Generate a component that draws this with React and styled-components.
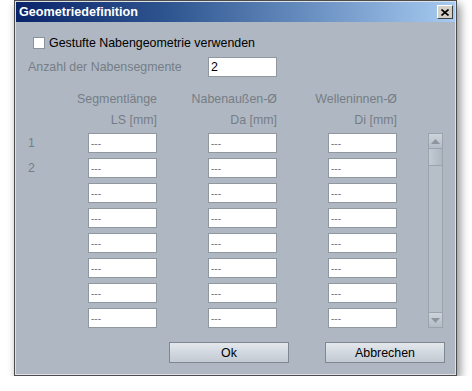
import React from 'react'
import styled, { createGlobalStyle } from 'styled-components'

const GlobalStyle = createGlobalStyle`
  html, body {
    margin: 0;
    padding: 0;
    background: #ffffff;
  }
  body {
    font-family: "Liberation Sans", Arial, sans-serif;
  }
`

const Window = styled.div`
  margin-left: 14px;
  width: 443px;
  height: 376px;
  box-sizing: border-box;
  border: 1px solid #4c4c4c;
  background: #afb8c2;
  box-shadow: 3px 4px 9px rgba(0, 0, 0, 0.45);
  display: flex;
  flex-direction: column;
`

const Inner = styled.div`
  flex: 1;
  border: 1px solid #dde1e6;
  display: flex;
  flex-direction: column;
`

const TitleBar = styled.div`
  height: 20px;
  display: flex;
  align-items: center;
  justify-content: space-between;
  padding: 0 2px 0 3px;
  background: linear-gradient(to right, #0a246a 0%, #2f5690 35%, #6f95c6 70%, #a6caf0 100%);
  color: #ffffff;
  font-weight: bold;
  font-size: 12.6px;
`

const CloseButton = styled.div`
  width: 16px;
  height: 14px;
  box-sizing: border-box;
  background: #d4d0c8;
  border: 1px solid;
  border-color: #ffffff #404040 #404040 #ffffff;
  display: flex;
  align-items: center;
  justify-content: center;
`

const Content = styled.div`
  flex: 1;
  display: flex;
  flex-direction: column;
  padding: 15px 10px 9px 12px;
  font-size: 12.4px;
  color: #000000;
`

const CheckRow = styled.label`
  display: flex;
  align-items: center;
  height: 12px;
  margin-left: 5px;
  gap: 4px;
`

const CheckBox = styled.span`
  width: 12px;
  height: 12px;
  box-sizing: border-box;
  background: #ffffff;
  border: 1px solid #8a929b;
`

const Muted = styled.span`
  color: #767d86;
`

const CountRow = styled.div`
  display: flex;
  align-items: center;
  margin-top: 8px;
  height: 20px;
  ${Muted} {
    width: 180px;
  }
`

const Field = styled.div`
  width: 69px;
  height: 20px;
  box-sizing: border-box;
  background: #ffffff;
  border: 1px solid #8f979f;
  display: flex;
  align-items: center;
  padding-left: 2px;
  font-size: ${(p) => (p.$small ? '10px' : '12.4px')};
  color: ${(p) => (p.$small ? '#6c737b' : '#000000')};
`

const HeaderRow = styled.div`
  display: flex;
  height: 21px;
  align-items: center;
  margin-top: ${(p) => p.$top || 0}px;
  margin-left: 9px;
`

const HeaderCell = styled.div`
  width: 120px;
  text-align: right;
  color: #767d86;
`

const TableArea = styled.div`
  display: flex;
  margin-top: 3px;
  gap: 31px;
`

const Rows = styled.div`
  display: flex;
  flex-direction: column;
  gap: 5px;
`

const Row = styled.div`
  display: flex;
  align-items: center;
  gap: 51px;
`

const RowLabel = styled.span`
  width: 9px;
  color: #767d86;
`

const RowFields = styled.div`
  display: flex;
  gap: 51px;
`

const ScrollBar = styled.div`
  width: 15px;
  box-sizing: border-box;
  display: flex;
  flex-direction: column;
  background: #b6bec7;
  border: 1px solid #9ba4ad;
`

const ScrollBtn = styled.div`
  height: 14px;
  display: flex;
  align-items: center;
  justify-content: center;
  background: linear-gradient(to bottom, #cdd4db, #b3bcc6);
  border-bottom: ${(p) => (p.$down ? 'none' : '1px solid #9ba4ad')};
  border-top: ${(p) => (p.$down ? '1px solid #9ba4ad' : 'none')};
`

const Thumb = styled.div`
  height: 16px;
  background: linear-gradient(to right, #c3cbd3, #aeb7c1);
  border-bottom: 1px solid #9ba4ad;
`

const Track = styled.div`
  flex: 1;
`

const ButtonRow = styled.div`
  display: flex;
  justify-content: flex-end;
  gap: 36px;
  margin-top: 14px;
`

const Button = styled.div`
  width: 120px;
  height: 21px;
  box-sizing: border-box;
  border: 1px solid #7f8790;
  background: linear-gradient(to bottom, #e4e8ed 0%, #d2d8df 50%, #c3cad2 100%);
  display: flex;
  align-items: center;
  justify-content: center;
  font-size: 12.4px;
  color: #000000;
`

const Arrow = ({ down }) => (
  <svg width="9" height="5" viewBox="0 0 9 5">
    <polygon points={down ? '0,0 9,0 4.5,5' : '0,5 9,5 4.5,0'} fill="#8d96a0" />
  </svg>
)

function App() {
  const rows = [1, 2, 3, 4, 5, 6, 7, 8]

  return (
    <>
      <GlobalStyle />
      <Window>
        <Inner>
          <TitleBar>
            <span>Geometriedefinition</span>
            <CloseButton>
              <svg width="8" height="7" viewBox="0 0 8 7">
                <path d="M0.5 0.5 L7.5 6.5 M7.5 0.5 L0.5 6.5" stroke="#000" strokeWidth="1.6" />
              </svg>
            </CloseButton>
          </TitleBar>
          <Content>
            <CheckRow>
              <CheckBox />
              <span>Gestufte Nabengeometrie verwenden</span>
            </CheckRow>
            <CountRow>
              <Muted>Anzahl der Nabensegmente</Muted>
              <Field>2</Field>
            </CountRow>
            <HeaderRow $top={11}>
              <HeaderCell>Segmentlänge</HeaderCell>
              <HeaderCell>Nabenaußen-Ø</HeaderCell>
              <HeaderCell>Welleninnen-Ø</HeaderCell>
            </HeaderRow>
            <HeaderRow>
              <HeaderCell>LS [mm]</HeaderCell>
              <HeaderCell>Da [mm]</HeaderCell>
              <HeaderCell>Di [mm]</HeaderCell>
            </HeaderRow>
            <TableArea>
              <Rows>
                {rows.map((r) => (
                  <Row key={r}>
                    <RowLabel>{r <= 2 ? r : ''}</RowLabel>
                    <RowFields>
                      <Field $small>---</Field>
                      <Field $small>---</Field>
                      <Field $small>---</Field>
                    </RowFields>
                  </Row>
                ))}
              </Rows>
              <ScrollBar>
                <ScrollBtn>
                  <Arrow />
                </ScrollBtn>
                <Thumb />
                <Track />
                <ScrollBtn $down>
                  <Arrow down />
                </ScrollBtn>
              </ScrollBar>
            </TableArea>
            <ButtonRow>
              <Button>Ok</Button>
              <Button>Abbrechen</Button>
            </ButtonRow>
          </Content>
        </Inner>
      </Window>
    </>
  )
}

export default App
